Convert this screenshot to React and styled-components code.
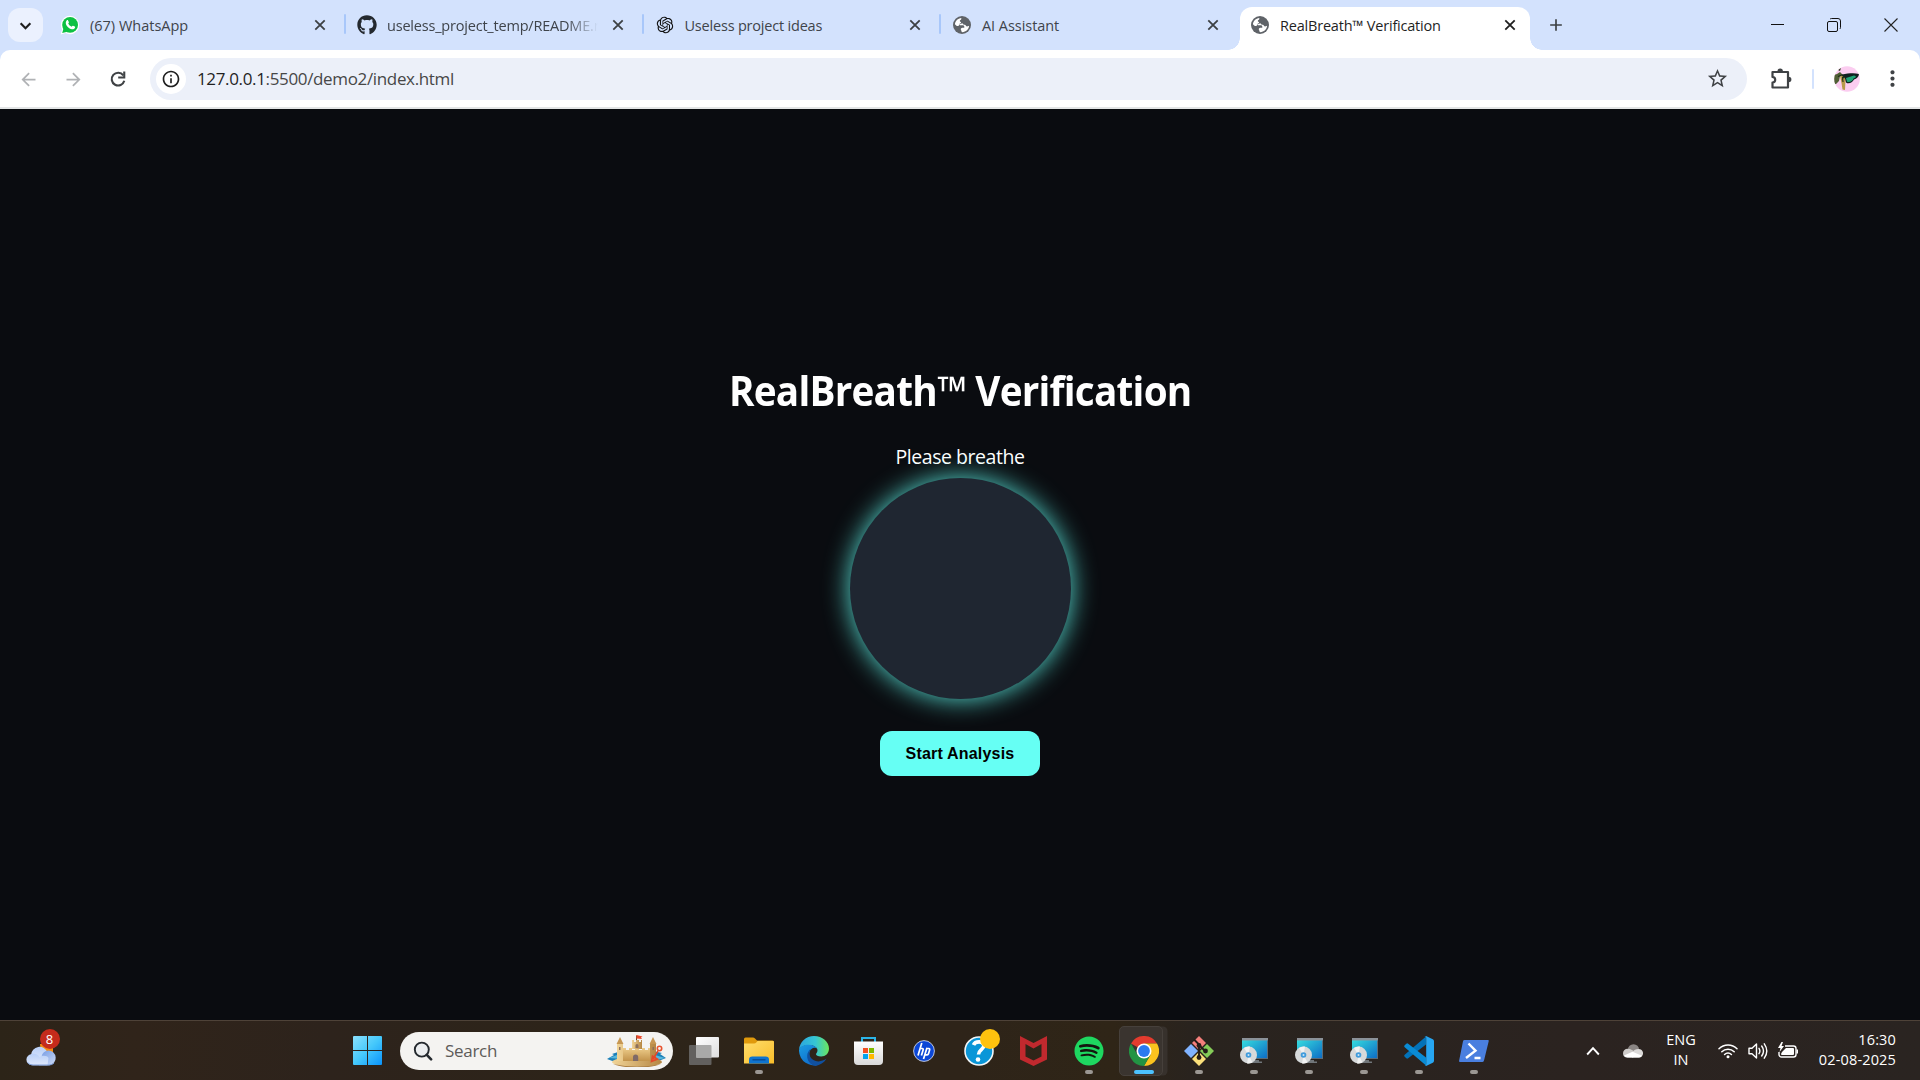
import React from "react";
import styled, { createGlobalStyle, css } from "styled-components";
import { MdAdd, MdArrowBack, MdArrowForward, MdStarOutline, MdMoreVert, MdInfoOutline } from "react-icons/md";
import { FaGithub, FaSpotify } from "react-icons/fa";
import { RiOpenaiFill } from "react-icons/ri";

const Global = createGlobalStyle`
  *, *::before, *::after { box-sizing: border-box; }
  body { margin: 0; font-family: "Open Sans", "Noto Sans", sans-serif; background: #0a0c10; }
  svg { display: block; flex: none; }
`;

const Screen = styled.div`
  display: flex;
  flex-direction: column;
  width: 1920px;
  height: 1080px;
  overflow: hidden;
`;

/* ---------- browser chrome ---------- */
const TabStrip = styled.header`
  display: flex;
  align-items: flex-start;
  height: 50px;
  background: #d3e2fd;
`;
const TabSearch = styled.button`
  display: grid;
  place-items: center;
  width: 35px;
  height: 34px;
  margin: 8px 6px 0 8px;
  padding: 0;
  border: 0;
  border-radius: 12px;
  background: #ebf1fe;
`;
const Tab = styled.div`
  position: relative;
  display: flex;
  align-items: center;
  width: ${(p) => (p.$active ? 290 : p.$w)}px;
  height: ${(p) => (p.$active ? 43 : 36)}px;
  margin-top: 7px;
  padding-left: ${(p) => (p.$active ? 10 : 11)}px;
  padding-right: ${(p) => (p.$active ? 10 : p.$pr || 14)}px;
  padding-bottom: ${(p) => (p.$active ? 7 : 0)}px;
  color: ${(p) => (p.$active ? "#1f1f1f" : "#3f444b")};
  ${(p) =>
    p.$active &&
    css`
      background: #fff;
      border-radius: 12px 12px 0 0;
      &::before,
      &::after {
        content: "";
        position: absolute;
        bottom: 0;
        width: 12px;
        height: 12px;
      }
      &::before {
        left: -12px;
        background: radial-gradient(circle at 0 0, transparent 11.5px, #fff 12px);
      }
      &::after {
        right: -12px;
        background: radial-gradient(circle at 100% 0, transparent 11.5px, #fff 12px);
      }
    `}
`;
const Favicon = styled.span`
  display: grid;
  place-items: center;
  width: 20px;
  height: 20px;
  margin-right: 10px;
  flex: none;
`;
const TabTitle = styled.span`
  flex: 1;
  min-width: 0;
  padding-top: 1px;
  white-space: nowrap;
  font-size: 14.5px;
  line-height: 20px;
  letter-spacing: ${(p) => p.$ls || 0}px;
  ${(p) => p.$fade && css`
    margin-right: -14px;
    mask-image: linear-gradient(90deg, #000 180px, transparent 211px);
  `}
`;
const TabClose = styled.span`
  display: grid;
  place-items: center;
  width: 20px;
  height: 20px;
  margin-left: 6px;
  color: ${(p) => (p.$active ? "#1f1f1f" : "#3c4043")};
`;
const Divider = styled.span`
  width: 2px;
  height: 20px;
  border-radius: 1px;
  background: ${(p) => p.$color};
  margin: ${(p) => p.$m || 0};
`;
const NewTab = styled.span`
  display: grid;
  place-items: center;
  width: 34px;
  height: 34px;
  margin: 8px 0 0 9px;
`;
const WindowButtons = styled.div`
  display: flex;
  align-items: center;
  height: 50px;
  margin-left: auto;
  gap: 43px;
  padding-right: 22px;
`;
const ToolbarWrap = styled.div`
  background: #d3e2fd;
`;
const Toolbar = styled.div`
  display: flex;
  align-items: center;
  height: 59px;
  padding-left: 18px;
  background: #fff;
  border-bottom: 2px solid #e3e5e6;
  border-radius: 10px 10px 0 0;
`;
const NavButton = styled.span`
  display: grid;
  place-items: center;
  width: 20px;
  height: 20px;
  margin-right: 25px;
  color: ${(p) => (p.$dim ? "#b0b2b5" : "#3f4245")};
`;
const Omnibox = styled.div`
  display: flex;
  align-items: center;
  width: 1597px;
  height: 42px;
  margin-left: -3px;
  padding: 0 18px 0 6px;
  border-radius: 21px;
  background: #ecf0f9;
`;
const SiteInfo = styled.span`
  display: grid;
  place-items: center;
  width: 30px;
  height: 30px;
  border-radius: 50%;
  background: #fff;
  margin-right: 11px;
`;
const Url = styled.span`
  flex: 1;
  font-size: 17px;
  color: #474747;
  letter-spacing: -0.35px;
  b { font-weight: 400; color: #1f1f1f; }
`;

/* ---------- page ---------- */
const Page = styled.main`
  display: flex;
  flex-direction: column;
  align-items: center;
  height: 911px;
  padding-top: 253px;
  background: #0a0c10;
  color: #fff;
`;
const Title = styled.h1`
  margin: 0;
  font-size: 41px;
  line-height: 56px;
  font-weight: 700;
  white-space: nowrap;
  letter-spacing: -0.8px;
  transform: scaleX(0.943);
`;
const Prompt = styled.p`
  margin: 25px 0 7.5px;
  font-size: 19.5px;
  line-height: 27px;
  letter-spacing: -0.45px;
`;
const BreathOrb = styled.div`
  width: 221px;
  height: 221px;
  border-radius: 50%;
  background: #1f2631;
  box-shadow: 0 0 26px rgba(100, 255, 242, 0.88);
`;
const StartButton = styled.button`
  width: 160px;
  height: 45px;
  margin-top: 32.5px;
  padding: 0;
  border: 0;
  border-radius: 12px;
  background: #66fff4;
  color: #000;
  font: 700 16px "Liberation Sans", Arial, sans-serif;
  letter-spacing: 0.2px;
`;

/* ---------- taskbar ---------- */
const Taskbar = styled.footer`
  display: flex;
  align-items: center;
  height: 60px;
  border-top: 1px solid #4e4238;
  background: linear-gradient(90deg, #2c2418 0, #30241a 7%, #2d231c 17%, #2d2419 30%, #2e2419 50%, #2f2517 58%, #29231e 62%, #2b2320 82%, #2a2421 100%);
  color: #fff;
`;
const Widget = styled.div`
  position: relative;
  width: 32px;
  height: 42px;
  margin: 0 296px 0 25px;
`;
const Badge = styled.span`
  position: absolute;
  top: ${(p) => p.$top}px;
  left: ${(p) => p.$left}px;
  display: grid;
  place-items: center;
  width: 20px;
  height: 20px;
  border-radius: 50%;
  background: ${(p) => p.$bg};
  font-size: 13px;
  line-height: 20px;
`;
const SearchBox = styled.div`
  display: flex;
  align-items: center;
  width: 273px;
  height: 38px;
  margin: 0 3px 0 18px;
  padding: 0 6px 0 13px;
  border-radius: 19px;
  background: #f4f3f1;
`;
const SearchText = styled.span`
  flex: 1;
  margin-left: 12px;
  font-size: 17px;
  color: #5d5b59;
  letter-spacing: -0.3px;
`;
const AppSlot = styled.div`
  position: relative;
  display: grid;
  place-items: center;
  width: 55px;
  height: 59px;
  &::after {
    content: "";
    position: absolute;
    left: 50%;
    bottom: 6px;
    width: ${(p) => (p.$state === "active" ? 20 : 8)}px;
    height: 4px;
    transform: translateX(-50%);
    border-radius: 2px;
    background: ${(p) => (p.$state === "active" ? "#4cc2ff" : p.$state === "open" ? "#9b9793" : "transparent")};
  }
`;
const ActivePlate = styled.div`
  display: grid;
  place-items: center;
  width: 44px;
  height: 50px;
  border-radius: 5px;
  background: #3a342f;
  border: 1px solid #46403b;
  box-shadow: 5px 0 0 -0.5px #37312c;
  margin-right: 6px;
  padding-left: 6px;
`;
const Tray = styled.div`
  display: flex;
  align-items: center;
  margin-left: auto;
  padding-right: 24px;
`;
const TrayText = styled.div`
  font-size: 14.5px;
  line-height: 20px;
  padding-bottom: 2px;
  text-align: ${(p) => p.$align};
  letter-spacing: ${(p) => p.$ls || 0}px;
  width: ${(p) => p.$w}px;
  white-space: nowrap;
`;
const Gap = styled.span`
  width: ${(p) => p.$w}px;
`;

/* ---------- drawings ---------- */
const Chevron = ({ up, size = 12, color, w = 2 }) => (
  <svg width={size} height={size} viewBox="0 0 12 12" fill="none" stroke={color} strokeWidth={w}>
    <path d={up ? "M1 9l5-5.5L11 9" : "M1.5 4l4.5 4.5L10.5 4"} />
  </svg>
);
const Close = () => (
  <svg width="12" height="12" viewBox="0 0 12 12" fill="none" stroke="currentColor" strokeWidth="1.800">
    <path d="M1.300 1.300l9.400 9.400M10.700 1.300l-9.400 9.400" />
  </svg>
);
const Globe = () => (
  <svg width="18" height="18" viewBox="0 0 18 18">
    <circle cx="9" cy="9" r="9" fill="#5f6368" />
    <path d="M1.900 8.300C2.200 4.800 4.900 2.200 8.300 1.900v1.200c0 .9-1.500.9-1.500 1.900 0 .9 1.300.7 1.300 1.600 0 1-1.800.8-1.800 1.900 0 .6.6.8 1.400.8h2c1 0 1.600.6 1.600 1.500v.9h-1.900c-1 0-1.600.8-1.600 1.600 0 1 .8 1.300.8 2.100v.7c3.900.4 7.300-2.500 7.500-6.300l-1.300.5c-1 .3-1.700-.2-2-.9-.4-.8-1.400-.5-2.200-.9-.9-.4-.6-1.300-1.400-1.300L7 8.300l-1.400 1.400c-.6.600-1.500.5-2.100 0z" fill="#fff" />
  </svg>
);
const Reload = () => (
  <svg width="18" height="18" viewBox="0 0 18 18">
    <path d="M14.300 5.300A6.400 6.400 0 1 0 15.300 10.800" fill="none" stroke="#3f4245" strokeWidth="2.100" />
    <path d="M14.200 1.400h2.100v7.100H9.200V6.400h5z" fill="#3f4245" />
  </svg>
);
const WhatsApp = () => (
  <svg width="20" height="20" viewBox="0 0 20 20">
    <path d="M10 0.8a9.2 9.2 0 0 1 0 18.4 9.3 9.3 0 0 1-4.400-1.100L.7 19.400 2 14.500A9.200 9.200 0 0 1 10 .8z" fill="#fff" />
    <circle cx="10.100" cy="9.900" r="7.900" fill="#0ec143" />
    <path d="M2.200 18l1.400-5 3.800 3.700z" fill="#0ec143" />
    <path d="M6.900 5.300c.5-.4 1-.3 1.200.1l.8 1.800c.1.400-.1.700-.7 1.400.9 1.600 1.800 2.400 3.400 3.100.8-.9 1-1.200 1.500-1l1.700.9c.5.300.4.900.1 1.500-.5.900-1.900 1.400-2.900 1.200-3.300-.7-5.900-3.400-6.200-6-.1-1.300.5-2.400 1.100-3z" fill="#fff" />
  </svg>
);
const Puzzle = () => (
  <svg width="24" height="24" viewBox="0 0 24 24">
    <path d="M3.500 5H19v15.500H3.500v-5c3.600-.5 3.600-5.100 0-5.600z" fill="none" stroke="#3f4245" strokeWidth="2.200" strokeLinejoin="round" />
    <path d="M8.500 4.300a2.700 2.700 0 0 1 5.400 0zM19.600 9.700a2.800 2.800 0 0 1 0 5.600z" fill="#3f4245" />
  </svg>
);
const Avatar = () => (
  <svg width="26" height="26" viewBox="0 0 26 26">
    <clipPath id="av"><circle cx="13" cy="13" r="12.800" /></clipPath>
    <g clipPath="url(#av)">
      <rect width="26" height="26" fill="#fbcdf0" />
      <path d="M0 9l3-1 3-2 3 3-3 1-1 5-3 3H0z" fill="#4f5f35" />
      <path d="M4 4l3-2-1 3z" fill="#2c3d22" />
      <path d="M6 10l4-1 1.500 5-.5 10-2.500-.5L7.500 17z" fill="#b79a4a" />
      <path d="M8 8.500c6-.8 11-1.800 17-.5-.3 3-2.300 4.500-5 5.500-1.500 3.200-5.500 5-8 3l-1-4z" fill="#10201f" />
      <path d="M12 12l8-2.500c2.500.2 2.500 2-.5 3-1 2.800-4 4.200-6.500 3.200z" fill="#1fa376" />
      <path d="M4 10.500l4-1.500 2 2-2 2.500M8.500 11l.5 5" stroke="#1c2b16" strokeWidth="1.100" fill="none" />
    </g>
  </svg>
);
const WeatherCloud = () => (
  <svg width="32" height="38" viewBox="0 0 32 38">
    <defs>
      <linearGradient id="wc" x1="0" y1="0" x2="0" y2="1"><stop offset="0" stopColor="#b9d0f8" /><stop offset="1" stopColor="#dfe8fb" /></linearGradient>
      <linearGradient id="wd" x1="0" y1="0" x2="1" y2="1"><stop offset="0" stopColor="#6f97e2" /><stop offset="1" stopColor="#cfdcf7" /></linearGradient>
    </defs>
    <path d="M15 14h13v8a4 4 0 0 1-4 2h-8z" fill="#f28a12" />
    <path d="M6 25a8.500 8.500 0 0 1 16.500-2.500L19 33H9z" fill="url(#wc)" />
    <path d="M23.500 20.500a7.400 7.400 0 0 1 1 14.700H14l2.500-8.700a7.600 7.600 0 0 1 7-6z" fill="url(#wd)" />
    <path d="M7 24c3-.6 6 .5 7.500 3 3-2 8-1.500 9 1l-1 7.200H7A5.600 5.600 0 0 1 7 24z" fill="url(#wc)" />
    <path d="M2.500 32.500Q4.500 35 8 35h16q3 0 5-2" fill="none" stroke="#7e9fdd" strokeWidth="1" />
  </svg>
);
const WinLogo = () => (
  <svg width="29" height="29" viewBox="0 0 29 29">
    <defs><linearGradient id="wl" x1="0" y1="0" x2="29" y2="29" gradientUnits="userSpaceOnUse"><stop offset="0" stopColor="#8be1fd" /><stop offset=".5" stopColor="#45c8fb" /><stop offset="1" stopColor="#0a93fb" /></linearGradient></defs>
    <path d="M1 0h13v14H0V1a1 1 0 0 1 1-1zM15 0h13a1 1 0 0 1 1 1v13H15zM0 15h14v14H1a1 1 0 0 1-1-1zM15 15h14v13a1 1 0 0 1-1 1H15z" fill="url(#wl)" />
  </svg>
);
const Magnifier = () => (
  <svg width="20" height="20" viewBox="0 0 20 20" fill="none" stroke="#24292e">
    <circle cx="8.800" cy="8.600" r="7" strokeWidth="1.900" fill="#eceef0" />
    <path d="M13.800 13.800l4.300 4.500" strokeWidth="2.600" strokeLinecap="round" />
  </svg>
);
const Castle = () => (
  <svg width="60" height="32" viewBox="0 0 60 32">
    <defs>
      <linearGradient id="cs" x1="0" x2="1"><stop offset="0" stopColor="#f1d497" /><stop offset="1" stopColor="#b58642" /></linearGradient>
      <linearGradient id="cb" x1="0" x2="0" y1="0" y2="1"><stop offset="0" stopColor="#edcc8a" /><stop offset="1" stopColor="#c2934b" /></linearGradient>
    </defs>
    <path d="M0 24l7-4-2-1 9-3 32 0 9 2-2 1 6 4-10 4H8z" fill="#1b7fb8" />
    <path d="M2 23l8-3 38 0 10 3-12 3z" fill="#58b7dc" />
    <ellipse cx="30" cy="27" rx="25" ry="4.800" fill="url(#cs)" />
    <path d="M6 29q24 5 48 0-8 3.500-24 3.500T6 29z" fill="#a97a3a" />
    <path d="M16 13h3v2h3v-2h3v2h3v-2h4v2h3v-2h3v2h3v-2h4v13H16z" fill="url(#cb)" />
    <path d="M25 5h2v2h2V5h3v2h2V5h1v9H25z" fill="url(#cs)" />
    <path d="M10 9h6v17h-6zM43 9h6v17h-6z" fill="url(#cs)" />
    <path d="M9.500 9L13 2l3.500 7zM42.500 9L46 2l3.500 7z" fill="#c79752" />
    <path d="M26 26v-4a2.600 2.600 0 0 1 5.200 0v4z" fill="#7f6a67" />
    <path d="M28.500 10.500a1.500 1.500 0 0 1 3 0V13h-3zM12 12h1.500v3H12zM45.500 12H47v3h-1.500z" fill="#8c715d" />
    <path d="M29.500 5V.5" stroke="#6b4a2b" strokeWidth="1" />
    <path d="M29.500 0l6 1.500-1.500 1 1 1.500-5.500-.5z" fill="#ec4a2c" />
    <path d="M46 24l5-8M44.500 26.500l1-5.500 5 3z" stroke="#e04a2a" strokeWidth="1.600" fill="#f0603a" />
    <circle cx="52.500" cy="13.500" r="2.200" fill="none" stroke="#e8542f" strokeWidth="1.600" />
  </svg>
);
const TaskView = () => (
  <svg width="30" height="28" viewBox="0 0 30 28">
    <defs><linearGradient id="tv" x1="0" y1="0" x2="1" y2="1"><stop offset="0" stopColor="#fff" /><stop offset="1" stopColor="#dedede" /></linearGradient></defs>
    <rect x="0" y="8" width="22.500" height="20" rx="1" fill="#62605e" />
    <rect x="7" y="0" width="23" height="20.500" rx="1" fill="url(#tv)" />
    <path d="M7 8h14.500a1 1 0 0 1 1 1v11.500H7z" fill="#a9a9a8" />
  </svg>
);
const Folder = () => (
  <svg width="30" height="28" viewBox="0 0 30 28">
    <defs><linearGradient id="fo" x1="0" y1="0" x2="1" y2="1"><stop offset="0" stopColor="#ffdd6b" /><stop offset="1" stopColor="#f9bd2a" /></linearGradient></defs>
    <path d="M0 2a1.500 1.500 0 0 1 1.500-1.500H9q1 0 2 1l2 2h15.500A1.500 1.500 0 0 1 30 5v8H0z" fill="#e09a0c" />
    <path d="M0 6.500h10q1.500 0 2.500-1.300L13.500 4H29a1 1 0 0 1 1 1v21.500H0z" fill="url(#fo)" />
    <path d="M5 26.500v-3.700A3.300 3.300 0 0 1 8.300 19.500h13.400a3.300 3.300 0 0 1 3.300 3.300v3.700z" fill="#0f74cf" />
    <path d="M8.500 22.800h13" stroke="#09478f" strokeWidth="1.300" />
  </svg>
);
const Edge = () => (
  <svg width="30" height="30" viewBox="0 0 30 30">
    <defs>
      <linearGradient id="e1" x1="0" y1=".4" x2="1" y2=".4"><stop offset="0" stopColor="#2ba6e0" /><stop offset=".55" stopColor="#36c6d3" /><stop offset="1" stopColor="#6be65c" /></linearGradient>
      <linearGradient id="e2" x1="0" y1="0" x2=".6" y2="1"><stop offset="0" stopColor="#1b9de2" /><stop offset="1" stopColor="#0f6ccb" /></linearGradient>
    </defs>
    <path d="M0 14C.5 6 7 0 15 0c8.500 0 15 6 15 12.500 0 5-3.500 8-7.800 8-3.500 0-5.200-1.300-5.200-2.300s1.500-1.500 1.500-4C18.500 11 14 9 9.500 9 4.500 9 1 11.500 0 14z" fill="url(#e1)" />
    <path d="M0 14c1-3.500 5-5.300 9.500-5.300 4.600 0 7.500 2 8.500 4-2.500-2-6.500-.2-7.500 3.300-1.400 5.500 2.500 12 9.500 12.500A15 15 0 0 1 0 15z" fill="url(#e2)" />
    <path d="M12 12.700c-3 4-1.500 8 1 10.300 4 3.500 10 3 14.500-.4-2.500 4.400-6.500 6.600-11 7.300-5.500-1-8.500-5.800-8.300-10.200.1-3 1.600-5.600 3.800-7z" fill="#10509f" />
  </svg>
);
const Store = () => (
  <svg width="29" height="30" viewBox="0 0 29 30">
    <defs><linearGradient id="st" x1="0" y1="0" x2="0" y2="1"><stop offset="0" stopColor="#fff" /><stop offset="1" stopColor="#d9d9d9" /></linearGradient></defs>
    <path d="M8 7V2h13v5" fill="none" stroke="#2bb5e8" strokeWidth="2" />
    <path d="M0 5.500h29V25a4 4 0 0 1-4 4H4a4 4 0 0 1-4-4z" fill="url(#st)" />
    <path d="M9 12h5v5H9z" fill="#f25022" /><path d="M15 12h5v5h-5z" fill="#7fba00" />
    <path d="M9 18h5v5H9z" fill="#00a4ef" /><path d="M15 18h5v5h-5z" fill="#ffb900" />
  </svg>
);
const Hp = () => (
  <svg width="22" height="22" viewBox="0 0 22 22">
    <circle cx="11" cy="11" r="10.400" fill="#0b46d6" stroke="#e4e8f2" strokeWidth=".8" />
    <path d="M8.800 3L5 15.500M7.300 8.500h2q1.200 0 .8 1.400L8.400 15.500M14 7.800L10.500 19M13.600 8.500h2.200q1.200 0 .8 1.400l-1.100 3.900q-.3 1-1.400 1h-2" fill="none" stroke="#fff" strokeWidth="1.700" />
  </svg>
);
const HelpBase = () => (
  <svg width="30" height="30" viewBox="0 0 30 30">
    <circle cx="15" cy="15" r="14" fill="#0a96d8" stroke="#f2f6f8" strokeWidth="1.600" />
    <path d="M9.500 9c1.500-4 10-4.500 10.300.5.200 4-5.300 4.300-5.300 9" fill="none" stroke="#fff" strokeWidth="3.600" />
    <circle cx="14" cy="23.500" r="2.300" fill="#fff" />
  </svg>
);
const McAfee = () => (
  <svg width="27" height="30" viewBox="0 0 27 30">
    <path d="M0 0l13.500 7L27 0v23.500L13.500 30 0 23.500zM5.500 8v12.500l8 4 8-4V8l-8 4.500z" fill="#c1292e" fillRule="evenodd" />
  </svg>
);
const Spotify = styled(FaSpotify)`
  color: #1ed760;
  background: radial-gradient(circle, #14160f 60%, transparent 62%);
`;
const Chrome = () => (
  <svg width="30" height="30" viewBox="0 0 30 30">
    <path d="M15 15L2 7.500A15 15 0 0 1 28 7.500H15z" fill="#e33b2e" />
    <path d="M15 7.500h13A15 15 0 0 1 15 30l6.500-11.200z" fill="#fcc31e" />
    <path d="M2 7.500A15 15 0 0 0 15 30l6.500-11.200L8.500 18.800z" fill="#229443" />
    <circle cx="15" cy="15" r="7.500" fill="#fff" /><circle cx="15" cy="15" r="5.900" fill="#2a7af0" />
  </svg>
);
const Git = () => (
  <svg width="30" height="30" viewBox="0 0 30 30">
    <path d="M15 0l7 7-7 7-7-7z" fill="#f57f7b" /><path d="M7 8l7 7-7 7-7-7z" fill="#80b3ff" />
    <path d="M23 8l7 7-7 7-7-7z" fill="#85cc58" /><path d="M15 16l7 7-7 7-7-7z" fill="#fbe07b" />
    <path d="M10 3.500l5 5v13M15 9l6 6" fill="none" stroke="#241d18" strokeWidth="1.900" />
    <circle cx="15" cy="9.500" r="2.400" fill="#241d18" /><circle cx="21.500" cy="15" r="2.400" fill="#241d18" /><circle cx="15" cy="21.500" r="2.400" fill="#241d18" />
  </svg>
);
const Installer = () => (
  <svg width="30" height="26" viewBox="0 0 30 26">
    <defs><linearGradient id="in" x1="0" y1="0" x2="1" y2="1"><stop offset="0" stopColor="#37e0e0" /><stop offset="1" stopColor="#0c68c4" /></linearGradient></defs>
    <path d="M3 1h26v20H3z" fill="url(#in)" /><path d="M3 0h26v2.500H3z" fill="#8b9299" /><path d="M28 2.500h1V21H14v-1h14z" fill="#5c6a75" />
    <path d="M14 22h6v1.500h3V25H12z" fill="#71767a" />
    <circle cx="9.500" cy="17" r="8.500" fill="#d6d9da" /><path d="M9.500 17L5 10a8.500 8.500 0 0 1 6-1.500zM9.500 17l4 7.500A8.500 8.500 0 0 1 8 25.400z" fill="#f1f2f2" />
    <circle cx="9.500" cy="17" r="2.800" fill="#3f9bdc" /><circle cx="9.500" cy="17" r="1" fill="#cfe6f4" />
  </svg>
);
const VsCode = () => (
  <svg width="30" height="30" viewBox="0 0 30 30">
    <path d="M.7 18.700L22 .500v8L4.200 22.300q-1 .700-1.900 0L.7 20.800q-1-1 0-2.100z" fill="#0372b8" />
    <path d="M.7 11.300L22 29.500v-8L4.200 7.700q-1-.7-1.900 0L.7 9.200q-1 1 0 2.100z" fill="#0a8bd4" />
    <path d="M22 0l6.800 3.200q1.200.6 1.200 2v19.600q0 1.400-1.200 2L22 30q-1 .2-1.500-.5 1.700.8 1.700-1.500V2q0-2.300-1.700-1.500Q21-.2 22 0z" fill="#27a6f2" />
  </svg>
);
const PowerShell = () => (
  <svg width="30" height="22" viewBox="0 0 30 22">
    <path d="M5.500 0H29q1 0 .7 1.200L25 20.500q-.4 1.500-1.800 1.500H1Q-.2 22 .1 20.700L4 1.300Q4.300 0 5.500 0z" fill="#4a7fdf" />
    <path d="M9.500 3.500l7 7.200L7 18M15.500 18h6" fill="none" stroke="#fff" strokeWidth="2.400" />
  </svg>
);
const OneDrive = () => (
  <svg width="20" height="14" viewBox="0 0 20 14">
    <circle cx="10.500" cy="5.800" r="5.600" fill="#8a8583" />
    <path d="M0 9.300A4.600 4.600 0 0 1 4.700 4.700q2.300 0 4.300 1.400l5 3-4 4.500H4.400A4.400 4.400 0 0 1 0 9.300z" fill="#cfccca" />
    <path d="M9.500 8.300q2-3.300 6-3.300a4.300 4.300 0 0 1 .5 8.600H9z" fill="#dcdad9" />
    <path d="M1 11.500l8.500-3.700 9.500 4q-1 1.800-3 1.800H4.500q-2.500 0-3.500-2.100z" fill="#fff" />
  </svg>
);
const Wifi = () => (
  <svg width="20" height="16" viewBox="0 0 20 16" fill="none" stroke="#fff" strokeWidth="1.500" strokeLinecap="round">
    <path d="M1 5.800a12.500 12.500 0 0 1 18 0M3.800 8.800a8.700 8.700 0 0 1 12.400 0M6.600 11.500a4.800 4.800 0 0 1 6.800 0" />
    <circle cx="10" cy="13.800" r="1.500" fill="#fff" stroke="none" />
  </svg>
);
const Volume = () => (
  <svg width="20" height="18" viewBox="0 0 20 18" fill="none" stroke="#fff" strokeWidth="1.400" strokeLinecap="round" strokeLinejoin="round">
    <path d="M1 6.300h3L8.500 2v14L4 11.700H1zM11 6.300q1.800 2.700 0 5.400M13.700 4q3.600 5 0 10M16.300 1.800q5 7.200 0 14.400" />
  </svg>
);
const Battery = () => (
  <svg width="20" height="17" viewBox="0 0 20 17">
    <path d="M7 4h8.500A2.500 2.500 0 0 1 18 6.500v6a2.500 2.500 0 0 1-2.500 2.500h-12A2.500 2.500 0 0 1 1 12.500V10" fill="none" stroke="#fff" strokeWidth="1.400" />
    <path d="M8 6h7q1 0 1 1v5q0 1-1 1H4q-1 0-1-1l1-2zM18.500 7.500H20v4h-1.500zM3.500 0L0 6h2.500L1.500 10 6 4H3.500L5 0z" fill="#fff" />
  </svg>
);

const TABS = [
  { icon: <WhatsApp />, title: "(67) WhatsApp", w: 295, ls: 0 },
  { icon: <FaGithub size={20} color="#24292f" />, title: "useless_project_temp/README.m", w: 295.5, ls: -0.2, fade: true },
  { icon: <RiOpenaiFill size={20} color="#111" />, title: "Useless project ideas", w: 295.5, ls: -0.2 },
  { icon: <Globe />, title: "AI Assistant", w: 299, pr: 17.5, ls: -0.05 },
];
const APPS = [
  [<TaskView />], [<Folder />, "open"], [<Edge />], [<Store />], [<Hp />],
  [<HelpBase />, "", true], [<McAfee />], [<Spotify size={30} />, "open"],
  [<Chrome />, "active"], [<Git />, "open"], [<Installer />, "open"],
  [<Installer />, "open"], [<Installer />, "open"], [<VsCode />, "open"], [<PowerShell />, "open"],
];

export default function App() {
  return (
    <Screen>
      <Global />
      <TabStrip>
        <TabSearch><Chevron size={13} color="#1f1f1f" /></TabSearch>
        {TABS.map((t, i) => (
          <React.Fragment key={t.title}>
            <Tab $w={t.w} $pr={t.pr}>
              <Favicon>{t.icon}</Favicon>
              <TabTitle $ls={t.ls} $fade={t.fade}>{t.title}</TabTitle>
              <TabClose><Close /></TabClose>
            </Tab>
            {i < 3 && <Divider $color="#a8c7fa" $m="14px 0 0" />}
          </React.Fragment>
        ))}
        <Tab $active>
          <Favicon><Globe /></Favicon>
          <TabTitle $ls={-0.2}>RealBreath™ Verification</TabTitle>
          <TabClose $active><Close /></TabClose>
        </Tab>
        <NewTab><MdAdd size={20} color="#3c4043" /></NewTab>
        <WindowButtons>
          <svg width="13" height="13" viewBox="0 0 13 13"><path d="M0 5.500h13" stroke="#111" /></svg>
          <svg width="14" height="14" viewBox="0 0 14 14" fill="none" stroke="#111"><rect x=".5" y="3.500" width="10" height="10" rx="1.500" /><path d="M3 1.200Q3.500.5 4.500.5H11A2.500 2.500 0 0 1 13.500 3v6.500q0 1-.8 1.500" /></svg>
          <svg width="14" height="14" viewBox="0 0 14 14"><path d="M.5.500l13 13M13.500.5l-13 13" stroke="#222" strokeWidth="1.100" /></svg>
        </WindowButtons>
      </TabStrip>
      <ToolbarWrap>
        <Toolbar>
          <NavButton $dim><MdArrowBack size={21} /></NavButton>
          <NavButton $dim><MdArrowForward size={21} /></NavButton>
          <NavButton><Reload /></NavButton>
          <Omnibox>
            <SiteInfo><MdInfoOutline size={20} color="#1f1f1f" /></SiteInfo>
            <Url><b>127.0.0.1</b>:5500/demo2/index.html</Url>
            <MdStarOutline size={23} color="#3f4245" />
          </Omnibox>
          <Gap $w={22} />
          <Puzzle />
          <Divider $color="#d3e2fd" $m="0 20px 0 19px" />
          <Avatar />
          <Gap $w={20} />
          <MdMoreVert size={25} color="#3f4245" />
        </Toolbar>
      </ToolbarWrap>
      <Page>
        <Title>RealBreath™ Verification</Title>
        <Prompt>Please breathe</Prompt>
        <BreathOrb />
        <StartButton>Start Analysis</StartButton>
      </Page>
      <Taskbar>
        <Widget><WeatherCloud /><Badge $top={-1} $left={14.5} $bg="#c42b1c">8</Badge></Widget>
        <WinLogo />
        <SearchBox><Magnifier /><SearchText>Search</SearchText><Castle /></SearchBox>
        {APPS.map(([icon, state, dot], i) => (
          <AppSlot key={i} $state={state}>
            {state === "active" ? <ActivePlate>{icon}</ActivePlate> : icon}
            {dot && <Badge $top={8} $left={29} $bg="#ffc20e" />}
          </AppSlot>
        ))}
        <Tray>
          <Chevron up size={14} color="#fff" w={1.6} />
          <Gap $w={23} />
          <OneDrive />
          <Gap $w={18} />
          <TrayText $align="center" $w={40}>ENG<br />IN</TrayText>
          <Gap $w={17} />
          <Wifi /><Gap $w={10} /><Volume /><Gap $w={10} /><Battery />
          <Gap $w={18} />
          <TrayText $align="right" $w={80} $ls={0.15}>16:30<br />02-08-2025</TrayText>
        </Tray>
      </Taskbar>
    </Screen>
  );
}
